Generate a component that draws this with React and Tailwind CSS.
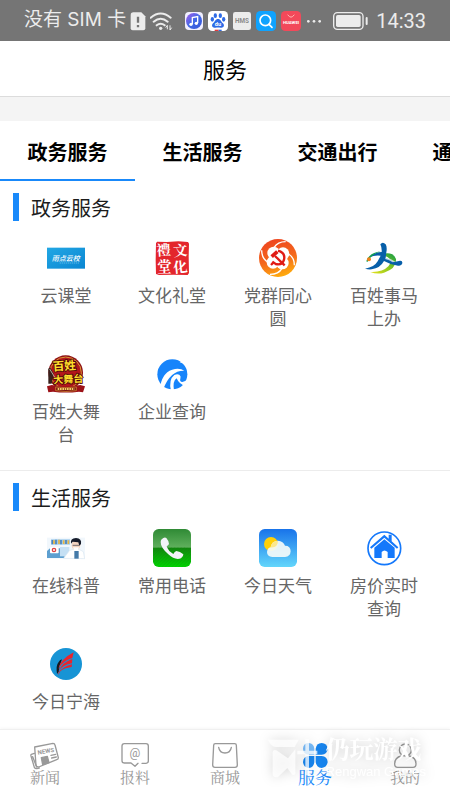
import React, { useState } from 'react';

/* ---------- Status bar icons ---------- */

const SimIcon = () => (
  <svg className="w-4 h-5" viewBox="0 0 48 60" aria-hidden="true">
    <path d="M10 4h24l12 12v36q0 6-6 6H8q-6 0-6-6V12q0-8 8-8z" fill="#ececec" />
    <path d="M24 17v18M24 42v7" stroke="#757575" strokeWidth="7" />
  </svg>
);

const WifiIcon = () => (
  <svg className="w-[23px] h-5" viewBox="0 0 69 60" fill="none" stroke="#ececec" strokeWidth="6" aria-hidden="true">
    <path d="M2 20Q32-5 62 20M11 32q21-18 42 0M20 43q12-10 24 0" strokeLinecap="round" />
    <circle cx="32" cy="52" r="5" fill="#ececec" stroke="none" />
    <path d="M52 55V43l-5 7M60 43v14l5-7" strokeWidth="3" />
  </svg>
);

const MusicIcon = () => (
  <svg className="w-[18px] h-[18px]" viewBox="0 0 54 54" aria-hidden="true">
    <defs>
      <linearGradient id="music" x1="0" y1="0" x2="1" y2="1">
        <stop offset="0" stopColor="#a65bea" />
        <stop offset="0.5" stopColor="#4069e6" />
        <stop offset="1" stopColor="#3753d6" />
      </linearGradient>
    </defs>
    <rect width="54" height="54" rx="12" fill="#f1efff" />
    <circle cx="27" cy="27" r="24" fill="url(#music)" />
    <path d="M22 36V17l16-3v19" fill="none" stroke="#fff" strokeWidth="4" />
    <circle cx="18" cy="37" r="5" fill="#fff" />
    <circle cx="34" cy="34" r="5" fill="#fff" />
  </svg>
);

const BaiduIcon = () => (
  <svg className="w-5 h-5" viewBox="0 0 60 60" aria-hidden="true">
    <rect width="60" height="60" rx="13" fill="#fff" />
    <g fill="#2e6be6">
      <ellipse cx="22" cy="14" rx="5" ry="7" />
      <ellipse cx="37" cy="14" rx="5" ry="7" />
      <ellipse cx="13" cy="25" rx="5" ry="7" />
      <ellipse cx="47" cy="25" rx="5" ry="7" />
      <path d="M30 24c8 0 9 8 15 13 6 6 2 15-7 13-5-1-11-1-16 0-9 2-13-7-7-13 6-5 7-13 15-13z" />
    </g>
    <text x="30" y="46" textAnchor="middle" fontSize="17" fontWeight="700" fill="#fff" fontFamily="Roboto, sans-serif">du</text>
    <path d="M20 58h12" stroke="#e33b3b" strokeWidth="4" />
    <path d="M32 58h9" stroke="#2e6be6" strokeWidth="4" />
  </svg>
);

const HmsIcon = () => (
  <svg className="w-[18px] h-[18px]" viewBox="0 0 54 54" aria-hidden="true">
    <rect width="54" height="54" rx="7" fill="#ececec" />
    <text x="27" y="34" textAnchor="middle" fontSize="19" fontWeight="700" fill="#8a8a8a" fontFamily="Roboto, sans-serif">HMS</text>
  </svg>
);

const FinderIcon = () => (
  <svg className="w-5 h-5" viewBox="0 0 60 60" aria-hidden="true">
    <rect width="60" height="60" rx="13" fill="#0fa3ff" />
    <circle cx="28" cy="28" r="16" fill="none" stroke="#fff" strokeWidth="5" />
    <path d="M39 40l9 9" stroke="#fff" strokeWidth="5" strokeLinecap="round" />
  </svg>
);

const HuaweiIcon = () => (
  <svg className="w-5 h-5" viewBox="0 0 60 60" aria-hidden="true">
    <rect width="60" height="60" rx="13" fill="#f2495a" />
    <path d="M20 11q10 15 20 0" fill="none" stroke="#ffb9b4" strokeWidth="3" />
    <text x="30" y="40" textAnchor="middle" fontSize="13" fontWeight="700" fill="#fff" fontFamily="Roboto, sans-serif">HUAWEI</text>
  </svg>
);

const DotsIcon = () => (
  <svg className="w-4 h-5" viewBox="0 0 48 60" fill="#ececec" aria-hidden="true">
    <circle cx="7" cy="31" r="4" />
    <circle cx="24" cy="31" r="4" />
    <circle cx="41" cy="31" r="4" />
  </svg>
);

const BatteryIcon = () => (
  <svg className="w-[35px] h-5" viewBox="0 0 105 60" aria-hidden="true">
    <rect x="2" y="5" width="88" height="50" rx="11" fill="none" stroke="#ececec" strokeWidth="4" />
    <rect x="9" y="12" width="74" height="36" rx="5" fill="#ececec" />
    <rect x="98" y="18" width="6" height="24" rx="3" fill="#ececec" />
  </svg>
);

/* ---------- Service icons, all on a 114 grid ---------- */

const ServiceIcon = ({ children }) => (
  <svg className="w-[38px] h-[38px]" viewBox="0 0 114 114" aria-hidden="true">
    {children}
  </svg>
);

const CloudClassIcon = () => (
  <ServiceIcon>
    <defs>
      <linearGradient id="cloudClass" x1="0" y1="0" x2="1" y2="1">
        <stop offset="0" stopColor="#22a7e4" />
        <stop offset="1" stopColor="#0a86d2" />
      </linearGradient>
    </defs>
    <rect y="26" width="114" height="63" fill="url(#cloudClass)" />
    <text x="56" y="66" textAnchor="middle" fontSize="21" fontStyle="italic" fontWeight="500" fill="#fff" fontFamily="'Noto Sans CJK SC', sans-serif">雨点云校</text>
    <path d="M38 72h58" stroke="#7fcbf1" strokeWidth="2" strokeDasharray="4 2" />
  </ServiceIcon>
);

const CultureHallIcon = () => (
  <ServiceIcon>
    <path d="M12 8l30 1 34-2 29 2 3 5-1 38 1 50-4 6-42-1-44 1-9-3-1-42 1-50z" fill="#e3262c" />
    <g fill="#fff" fontSize="43" fontWeight="700" textAnchor="middle" fontFamily="'Noto Serif CJK SC', 'Noto Sans CJK SC', sans-serif">
      <text x="32" y="49" transform="rotate(-4 32 35)">禮</text>
      <text x="82" y="50" transform="rotate(-6 82 35)">文</text>
      <text x="34" y="99">堂</text>
      <text x="82" y="100" transform="rotate(-6 82 85)">化</text>
    </g>
  </ServiceIcon>
);

const PartyIcon = () => (
  <ServiceIcon>
    <defs>
      <linearGradient id="party" x1="0.3" y1="0" x2="0.6" y2="1">
        <stop offset="0" stopColor="#ee4420" />
        <stop offset="0.55" stopColor="#f4691c" />
        <stop offset="1" stopColor="#ffae0c" />
      </linearGradient>
    </defs>
    <circle cx="57" cy="57" r="57" fill="url(#party)" />
    <g fill="none" stroke="#fff" strokeWidth="4">
      <path d="M45 26Q56 8 80 8M88 45q18 10 18 34M69 88q-10 18-36 18M26 69Q8 58 8 34" />
    </g>
    <g fill="#fff">
      <circle cx="44" cy="42" r="19" />
      <circle cx="72" cy="44" r="19" />
      <circle cx="70" cy="72" r="19" />
      <circle cx="42" cy="70" r="19" />
    </g>
    <g fill="none" stroke="#e01b16">
      <path d="M57 35q23 7 18 27-5 18-25 13l-10-7" strokeWidth="7" />
      <path d="M43 71l-7 7" strokeWidth="7" />
      <path d="M48 51l29 28" strokeWidth="7" />
      <path d="M38 53l17-15" strokeWidth="11" />
    </g>
  </ServiceIcon>
);

const HandleIcon = () => (
  <ServiceIcon>
    <defs>
      <linearGradient id="swoosh" x1="0" y1="1" x2="1" y2="0">
        <stop offset="0" stopColor="#e9e21c" />
        <stop offset="0.5" stopColor="#8cc820" />
        <stop offset="1" stopColor="#0e9a48" />
      </linearGradient>
    </defs>
    <path d="M48 46q38-10 45 14 2 28-36 41-20 6-41-2 36 2 54-17 16-20-8-30-6-3-14-6z" fill="url(#swoosh)" />
    <path d="M46 16q7-9 16 0 5 8 2 24l-2 17q14 3 26 12l17-4q8-1 7 8-2 9-13 7-21-2-42-14-11 21-37 25-10 1-20-2 28-4 38-22l9-17Q30 47 11 56q18-17 39-17 1-13-4-23z" fill="#075fa9" />
    <path d="M62 56q15 2 29 12l-8 2q-10-8-23-10z" fill="#fff" opacity=".7" />
    <path d="M4 67q6-24 43-30-28 8-40 32z" fill="#12a050" />
    <circle cx="12" cy="61" r="6" fill="#f08219" />
  </ServiceIcon>
);

const StageIcon = () => (
  <ServiceIcon>
    <circle cx="56" cy="53" r="52" fill="#8f1015" />
    <circle cx="56" cy="53" r="47" fill="#b3161b" stroke="#d99b37" strokeWidth="3" />
    <path d="M4 48q-2-10 6-10l10 18-6 30H4z" fill="#38201c" />
    <path d="M8 42l16 26" stroke="#b9aaa0" strokeWidth="3" />
    <g fontWeight="700" textAnchor="middle" fill="#ffdf2b" stroke="#4c0808" strokeWidth="5" paintOrder="stroke" fontFamily="'Noto Sans CJK SC', sans-serif">
      <text x="52" y="45" fontSize="35" transform="rotate(-4 52 32)">百姓</text>
      <text x="64" y="83" fontSize="30" transform="rotate(-3 64 70)">大舞台</text>
    </g>
    <path d="M0 94l14-4q43 8 86 0l14 4-6 18-12-2q-40 5-78 0l-14 2z" fill="#9c1218" />
    <path d="M26 96q30 4 62 0v11q-32 5-62 0z" fill="#7a1112" stroke="#d99b37" strokeWidth="2" />
    <path d="M32 102h50" stroke="#f1cf62" strokeWidth="6" strokeDasharray="5 2" />
  </ServiceIcon>
);

const CompanyIcon = () => (
  <ServiceIcon>
    <circle cx="58" cy="58" r="45" fill="#1684fb" />
    <g fill="#fff">
      <path d="M98 10L80 22q16 4 22 16l12-2z" />
      <path d="M22 92Q30 48 66 42q18-2 28 5-40-2-62 52z" />
      <path d="M54 108Q46 74 64 60q8-4 15-1 6 5 3 12-3 8 6 10 8 0 15-8l9 9-13 12Q78 88 71 70q-13 8-8 38z" />
    </g>
  </ServiceIcon>
);

const ScienceIcon = () => (
  <ServiceIcon>
    <rect y="26" width="114" height="63" fill="#f1f7fc" />
    <path d="M12 31h57v16H12z" fill="#9ecbec" />
    <path d="M16 33v13M27 32v14M42 33v13M57 33v12" stroke="#4b83bd" strokeWidth="5" />
    <path d="M21 34v11M36 32v13M50 34v11M64 34v11" stroke="#eab541" strokeWidth="5" />
    <path d="M0 66l9-8h44v29H0z" fill="#5d9fd0" />
    <rect x="9" y="54" width="26" height="19" rx="3" fill="#fff" />
    <circle cx="21" cy="63" r="5" fill="#fff" stroke="#df4545" strokeWidth="4" />
    <path d="M39 54h28v28H39z" fill="#c5e0f4" />
    <path d="M50 88l18-24 12-3h16l13 7 4 21z" fill="#fff" stroke="#d9e7f1" strokeWidth="2" />
    <path d="M82 66h13v23H82z" fill="#447aa8" />
    <ellipse cx="87" cy="49" rx="13" ry="15" fill="#f3d4c1" />
    <path d="M72 44q-3-16 15-17 18 2 15 18l-5 5-3-10-17-2z" fill="#171c2b" />
    <path d="M77 49h20" stroke="#34394a" strokeWidth="2" />
    <path d="M78 55h18l-4 10H82z" fill="#fff" />
  </ServiceIcon>
);

const PhoneIcon = () => (
  <ServiceIcon>
    <defs>
      <linearGradient id="phone" x1="0" y1="0" x2="0" y2="1">
        <stop offset="0" stopColor="#2f8a35" />
        <stop offset="0.48" stopColor="#5faf5c" />
        <stop offset="0.5" stopColor="#12860f" />
        <stop offset="1" stopColor="#00d500" />
      </linearGradient>
      <pattern id="phoneLines" width="7" height="7" patternUnits="userSpaceOnUse" patternTransform="rotate(45)">
        <path d="M0 0v7" stroke="#0a6e0a" strokeWidth="3" />
      </pattern>
    </defs>
    <rect width="114" height="114" rx="17" fill="url(#phone)" />
    <rect y="54" width="114" height="60" rx="17" fill="url(#phoneLines)" opacity=".25" />
    <path d="M26 31q8-8 14-4 8 9 8 18-2 4-7 7 4 14 20 23 4-7 9-9 11 1 21 10 1 7-7 12-18 7-38-12Q23 56 23 39q0-5 3-8z" fill="#f3f3f8" />
  </ServiceIcon>
);

const WeatherIcon = () => (
  <ServiceIcon>
    <defs>
      <linearGradient id="sky" x1="0" y1="0" x2="0" y2="1">
        <stop offset="0" stopColor="#1873ea" />
        <stop offset="1" stopColor="#63d6fb" />
      </linearGradient>
    </defs>
    <rect width="114" height="114" rx="17" fill="url(#sky)" />
    <circle cx="36" cy="45" r="21" fill="#ffd009" />
    <path d="M40 84q-16-1-16-15 1-12 11-14 3-19 22-20 16 1 21 15 17 0 17 17-1 16-17 17z" fill="#f3faf9" opacity=".93" />
    <path d="M35 55q3-19 22-20-1 22-22 20z" fill="#fbe88d" />
  </ServiceIcon>
);

const HouseIcon = () => (
  <ServiceIcon>
    <circle cx="58" cy="58" r="49" fill="#fff" stroke="#1478fb" strokeWidth="5" />
    <g fill="#1478fb">
      <path d="M19 59l-4-4 43-38 13 12V17h9v20l20 18-4 4-38-33z" />
      <path d="M28 56l30-25 31 25v31H68V69q-10-9-18 0v18H28z" />
    </g>
  </ServiceIcon>
);

const NinghaiIcon = () => (
  <ServiceIcon>
    <circle cx="57" cy="57" r="48" fill="#1794d5" />
    <path d="M30 87q-4-26 5-36 3-6 10-8-9 20-10 37z" fill="#17171d" />
    <path d="M34 72Q38 44 80 22l-4 17Q46 48 34 72zM35 78q10-26 41-36l-1 13Q47 60 35 78zM35 82q14-18 40-24l-1 8q-24 3-34 13l-7 12z" fill="#e8252e" />
  </ServiceIcon>
);

/* ---------- Bottom nav icons, 90 x 84 grid ---------- */

const NavSvg = ({ children }) => (
  <svg className="w-[30px] h-7" viewBox="0 0 90 84" fill="none" stroke="currentColor" strokeWidth="4" strokeLinejoin="round" strokeLinecap="round" aria-hidden="true">
    {children}
  </svg>
);

const NewsIcon = () => (
  <NavSvg>
    <path d="M14 15l55-11q5 0 6 5l10 38q0 5-5 6l-54 22q-7 0-8-5z" />
    <path d="M13 34L4 37q-2 1-1 5l10 34q2 4 7 4l8-2M8 44l12 31" />
    <text x="24" y="38" fontSize="18" fontWeight="700" fill="currentColor" stroke="none" fontFamily="Roboto, sans-serif" transform="rotate(-10 24 38)">NEWS</text>
    <path d="M34 47l18-4 5 19-19 6z" fill="currentColor" />
    <path d="M63 40l14-3M65 48l14-3" />
  </NavSvg>
);

const ReportIcon = () => (
  <NavSvg>
    <path d="M66 64h12q7-1 7-7V12q0-7-7-7H13q-7 0-7 7v44q0 7 7 7h20l12 10 9-9" />
    <text x="45" y="46" textAnchor="middle" fontSize="36" fill="currentColor" stroke="none" fontFamily="Roboto, sans-serif">@</text>
  </NavSvg>
);

const ShopIcon = () => (
  <NavSvg>
    <path d="M16 5h58q5 0 5 5l3 59q0 7-7 7H15q-7 0-7-7l3-59q0-5 5-5z" />
    <path d="M26 16q3 17 19 17t19-17" />
  </NavSvg>
);

const ServicesIcon = () => (
  <NavSvg>
    <g fill="#1886f0" stroke="none">
      <path d="M43 38H27Q9 36 9 20q1-17 17-17 16 2 17 18z" fill="#79bdfb" />
      <path d="M47 38V21Q49 3 65 3q16 1 18 17-1 16-18 18z" />
      <path d="M43 42v18q-1 17-17 18Q10 76 9 60q1-17 17-18zM47 42h18q17 1 18 18-2 16-18 18-16-1-18-18z" />
    </g>
  </NavSvg>
);

const MeIcon = () => (
  <NavSvg>
    <circle cx="46" cy="24" r="18" />
    <path d="M34 42Q14 46 14 66q0 10 9 10h46q9 0 9-10 0-20-20-24" />
  </NavSvg>
);

/* ---------- Data ---------- */

const tabs = ['政务服务', '生活服务', '交通出行', '通讯服务'];

const sections = [
  {
    title: '政务服务',
    items: [
      { label: '云课堂', Icon: CloudClassIcon },
      { label: '文化礼堂', Icon: CultureHallIcon },
      { label: '党群同心圆', Icon: PartyIcon },
      { label: '百姓事马上办', Icon: HandleIcon },
      { label: '百姓大舞台', Icon: StageIcon },
      { label: '企业查询', Icon: CompanyIcon }
    ]
  },
  {
    title: '生活服务',
    items: [
      { label: '在线科普', Icon: ScienceIcon },
      { label: '常用电话', Icon: PhoneIcon },
      { label: '今日天气', Icon: WeatherIcon },
      { label: '房价实时查询', Icon: HouseIcon },
      { label: '今日宁海', Icon: NinghaiIcon }
    ]
  }
];

const navItems = [
  { label: '新闻', Icon: NewsIcon },
  { label: '报料', Icon: ReportIcon },
  { label: '商城', Icon: ShopIcon },
  { label: '服务', Icon: ServicesIcon, active: true },
  { label: '我的', Icon: MeIcon }
];

/* ---------- Page parts ---------- */

const StatusBar = () => (
  <div className="flex h-[41px] items-center justify-between bg-[#757575] px-6 text-[#ececec]">
    <div className="flex items-center gap-1">
      <span className="font-[Inter,'Noto_Sans_CJK_SC',sans-serif] text-[19px] whitespace-nowrap">没有 SIM 卡</span>
      <SimIcon />
      <WifiIcon />
    </div>
    <div className="flex items-center gap-[5px]">
      <MusicIcon />
      <BaiduIcon />
      <HmsIcon />
      <FinderIcon />
      <HuaweiIcon />
      <DotsIcon />
    </div>
    <div className="flex items-center gap-2">
      <BatteryIcon />
      <span className="font-[Roboto,sans-serif] text-xl">14:33</span>
    </div>
  </div>
);

const ServiceSection = ({ title, items }) => (
  <section className="px-[13px] pt-3 pb-[25px] last:pb-3">
    <h2 className="flex items-center gap-3 text-xl text-[#1c1c1c]">
      <span className="h-7 w-[6px] bg-[#1989fa]" />
      <span className="pt-[2px] leading-[26px]">{title}</span>
    </h2>
    <div className="grid grid-cols-4 gap-y-[26px] pt-[18px]">
      {items.map(({ label, Icon }) => (
        <a key={label} href="#" className="flex flex-col items-center gap-[6px]">
          <Icon />
          <span className="w-[72px] text-center text-[17px] leading-[23px] text-[#666]">{label}</span>
        </a>
      ))}
    </div>
  </section>
);

const Watermark = () => (
  <div className="pointer-events-none absolute top-1 right-6 flex items-center gap-[6px] text-white drop-shadow-[0_0_6px_rgba(0,0,0,0.2)]">
    <svg className="w-[52px] h-10" viewBox="0 0 156 120" fill="#fff" opacity=".75" aria-hidden="true">
      <path d="M0 5h92L80 27H24Q9 25 0 5z" />
      <path d="M14 42q2-9 11-5l35 24 22-27v72q-2 8-9 4L58 90l-28 27q-14 3-16-9z" />
      <path d="M88 38h60v11H88zM112 4h11v108h-11z" />
    </svg>
    <div className="whitespace-nowrap">
      <div className="text-2xl leading-7 font-bold">仍玩游戏</div>
      <div className="font-['Liberation_Sans'] text-[13px] leading-5">Rengwan Games</div>
    </div>
  </div>
);

const BottomNav = () => (
  <nav className="relative mt-auto grid grid-cols-5 border-t border-[#f0f0f0] bg-white pt-3 pb-4 font-['Noto_Serif_CJK_SC','Noto_Sans_CJK_SC',sans-serif] shadow-[0_-1px_3px_rgba(0,0,0,0.04)]">
    {navItems.map(({ label, Icon, active }) => (
      <a
        key={label}
        href="#"
        aria-current={active ? 'page' : undefined}
        className={`flex flex-col items-center ${active ? 'text-[17px] text-[#1989fa]' : 'text-[15px] text-[#999]'}`}
      >
        <Icon />
        <span className="leading-[14px]">{label}</span>
      </a>
    ))}
    <Watermark />
  </nav>
);

const App = () => {
  const [activeTab, setActiveTab] = useState(0);

  return (
    <div className="flex min-h-screen flex-col overflow-hidden bg-white font-['Noto_Sans_CJK_SC',sans-serif]">
      <StatusBar />
      <header className="flex h-14 items-center justify-center border-b border-[#dcdcdc]">
        <h1 className="text-[22px] text-black">服务</h1>
      </header>
      <div className="h-6 bg-[#f4f4f4]" />

      <div className="flex overflow-hidden" role="tablist">
        {tabs.map((tab, i) => (
          <button
            key={tab}
            role="tab"
            aria-selected={i === activeTab}
            onClick={() => setActiveTab(i)}
            className={`h-[60px] w-[30%] shrink-0 border-b-2 pt-1 text-xl font-bold text-black ${i === activeTab ? 'border-[#1989fa]' : 'border-transparent'}`}
          >
            {tab}
          </button>
        ))}
      </div>

      <main className="divide-y divide-[#ececec]">
        {sections.map((section) => (
          <ServiceSection key={section.title} {...section} />
        ))}
      </main>

      <BottomNav />
    </div>
  );
};

export default App;
